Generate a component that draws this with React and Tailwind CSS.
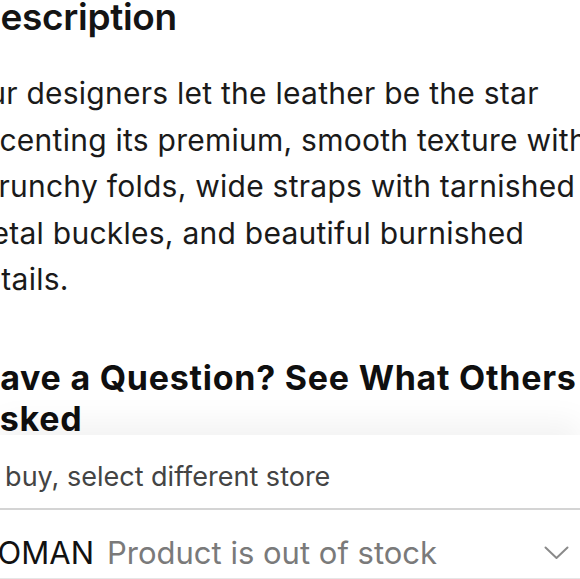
export default function App() {
  return (
    <div className="relative h-[579px] w-[580px] overflow-hidden bg-white font-['Inter',sans-serif] text-[#1a1a1a]">
      <div className="-ml-[26px] w-[680px]">
        {/* Description */}
        <h2 className="-mt-[5px] text-[37px] font-semibold leading-[44px] tracking-[-0.3px] text-[#141414]">
          Description
        </h2>
        <p className="-ml-[9px] mt-[31px] text-[30px] leading-[46.5px] tracking-[0.25px]">
          Our designers let the leather be the star
          <br />
          accenting its premium, smooth texture with
          <br />
          scrunchy folds, wide straps with tarnished
          <br />
          metal buckles, and beautiful burnished
          <br />
          details.
        </p>

        {/* Q&A */}
        <h2 className="mt-[54px] text-[34px] font-bold leading-[41px] tracking-[0.75px] text-[#0f0f0f]">
          Have a Question? See What Others
          <br />
          Asked
        </h2>
      </div>

      {/* sticky store bar */}
      <div className="absolute bottom-0 left-0 right-0 bg-white shadow-[0_-14px_28px_rgba(0,0,0,0.05)]">
        <p className="-ml-[34px] pt-[22px] pb-[12px] text-[27px] leading-[39px] text-[#444]">
          To buy, select different store
        </p>
        <div className="border-t-2 border-[#d4d4d4]" />
        <div className="flex items-center justify-between border-b border-[#e6e6e6] pt-[20px] pb-[2px]">
          <div className="-ml-[33px] flex items-baseline gap-[13px] text-[31px] leading-[46.5px]">
            <span className="text-[#111]">WOMAN</span>
            <span className="text-[#7a7a7a]">Product is out of stock</span>
          </div>
          <svg
            className="mr-[11px] h-[14px] w-[25px] text-[#8a8a8a]"
            viewBox="0 0 25 14"
            fill="none"
            stroke="currentColor"
            strokeWidth="2"
            strokeLinecap="round"
            strokeLinejoin="round"
          >
            <polyline points="1.5,1.5 12.5,12 23.5,1.5" />
          </svg>
        </div>
      </div>
    </div>
  )
}
